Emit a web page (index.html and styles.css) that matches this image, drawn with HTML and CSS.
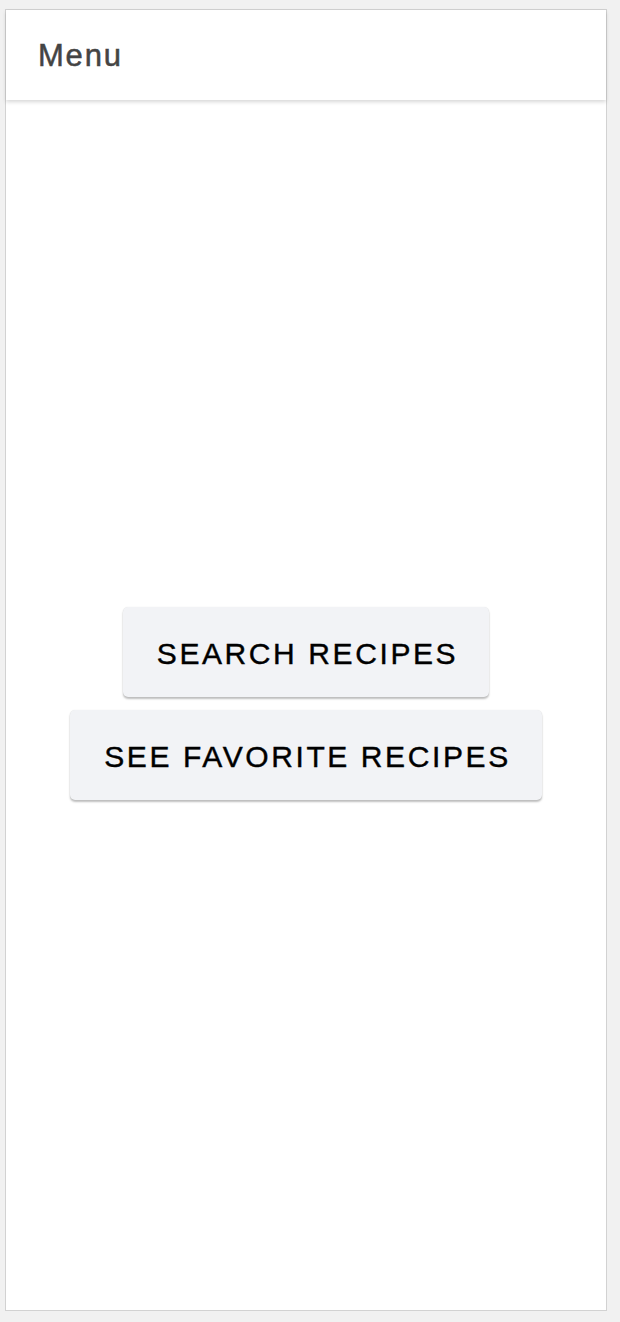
FILE: index.html
```html
<!DOCTYPE html>
<html>
<head>
<meta charset="utf-8">
<link rel="stylesheet" href="styles.css">
</head>
<body>
<div class="frame">
  <header class="header"><span class="title">Menu</span></header>
  <main class="content">
    <button class="btn">SEARCH RECIPES</button>
    <button class="btn">SEE FAVORITE RECIPES</button>
  </main>
</div>
</body>
</html>
```
FILE: styles.css
```css
html, body {
  margin: 0;
  padding: 0;
  height: 100%;
}
body {
  background: #f1f1f1;
  padding: 9px 13px 11px 5px;
  box-sizing: border-box;
  font-family: "Liberation Sans", Arial, sans-serif;
}
.frame {
  height: 100%;
  box-sizing: border-box;
  border: 1px solid #d2d2d2;
  background: #ffffff;
  display: flex;
  flex-direction: column;
}
.header {
  height: 90px;
  flex: none;
  display: flex;
  align-items: center;
  padding-left: 32px;
  background: #fff;
  box-shadow: 0 2px 4px rgba(0,0,0,0.16);
  position: relative;
  z-index: 1;
}
.title {
  font-size: 31px;
  letter-spacing: 1.8px;
  color: #444444;
  -webkit-text-stroke: 0.5px #444444;
  margin-top: 2px;
}
.content {
  flex: 1;
  display: flex;
  flex-direction: column;
  align-items: center;
  justify-content: center;
  gap: 13px;
  padding-bottom: 4px;
}
.btn {
  font-family: "Liberation Sans", Arial, sans-serif;
  font-size: 30px;
  letter-spacing: 2.6px;
  color: #000;
  -webkit-text-stroke: 0.4px #000;
  background: #f2f3f6;
  border: none;
  border-radius: 5px;
  height: 90px;
  padding: 4px 31px 0 34px;
  box-shadow: 0 2px 2px rgba(0,0,0,0.25), 0 0 1px rgba(0,0,0,0.12);
}
```
